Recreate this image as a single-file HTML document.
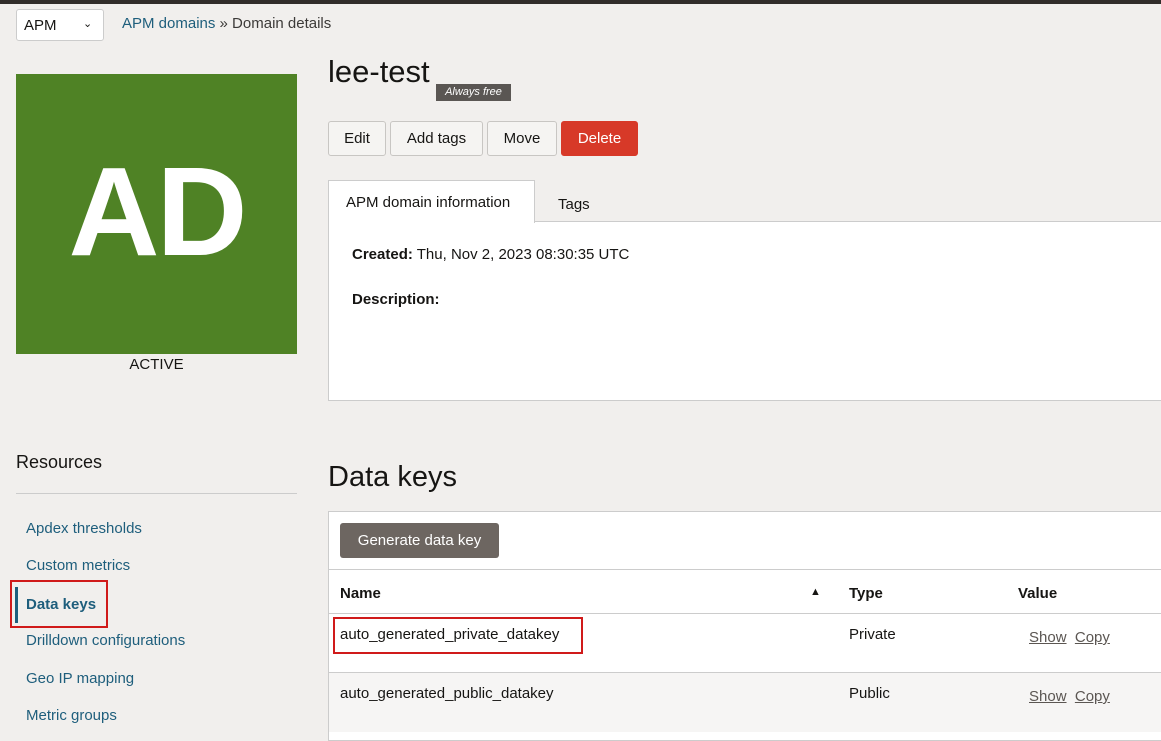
<!DOCTYPE html>
<html><head><style>
*{margin:0;padding:0;box-sizing:border-box}
body{width:1161px;height:731px;overflow:hidden;background:#f1efed;font-family:"Liberation Sans",sans-serif;color:#161513;position:relative;font-size:15px}
.a{position:absolute}
.topbar{left:0;top:0;width:1161px;height:4px;background:#312d2a}
.sel{left:16px;top:9px;width:88px;height:32px;background:#fff;border:1px solid #ccc;border-radius:3px;font-size:15px;padding:7px 0 0 7px}
.btn{position:absolute;top:121px;height:35px;border:1px solid #c8c6c3;background:#f5f4f2;border-radius:3px;font-size:15px;text-align:center;line-height:33px;color:#161513}
.nav{left:26px;font-size:15px;color:#1e5e7c}
.link{text-decoration:underline;color:#5b5652;font-size:15px}
</style></head><body>
<div class="a topbar"></div>
<div class="a sel">APM<span style="position:absolute;left:66px;top:7px;font-size:11px">&#8964;</span></div>
<div class="a" style="left:122px;top:15px;font-size:15px;color:#3c3a38"><span style="color:#1e5e7c">APM domains</span> » Domain details</div>
<div class="a" style="left:16px;top:74px;width:281px;height:280px;background:#4f8225;color:#fff;font-weight:bold;font-size:126px;text-align:center;line-height:276px;letter-spacing:-3px">AD</div>
<div class="a" style="left:16px;top:356px;width:281px;text-align:center;font-size:15px">ACTIVE</div>
<div class="a" style="left:328px;top:54px;font-size:31px">lee-test</div>
<div class="a" style="left:436px;top:84px;width:75px;height:17px;background:#5a5653;color:#fff;font-size:11px;font-style:italic;text-align:center;line-height:17px">Always free</div>
<div class="btn" style="left:328px;width:58px">Edit</div>
<div class="btn" style="left:390px;width:93px">Add tags</div>
<div class="btn" style="left:487px;width:70px">Move</div>
<div class="btn" style="left:561px;width:77px;background:#d73928;border-color:#d73928;color:#fff">Delete</div>
<div class="a" style="left:328px;top:221px;width:840px;height:180px;background:#fff;border:1px solid #ccc"></div>
<div class="a" style="left:328px;top:180px;width:207px;height:43px;background:#fff;border:1px solid #ccc;border-bottom:none;font-size:15px;padding:13px 0 0 17px">APM domain information</div>
<div class="a" style="left:558px;top:196px;font-size:15px">Tags</div>
<div class="a" style="left:352px;top:246px;font-size:15px"><b>Created:</b> Thu, Nov 2, 2023 08:30:35 UTC</div>
<div class="a" style="left:352px;top:291px;font-size:15px;font-weight:bold">Description:</div>
<div class="a" style="left:16px;top:452px;font-size:18px">Resources</div>
<div class="a" style="left:16px;top:493px;width:281px;height:1px;background:#ccc"></div>
<div class="a nav" style="top:520px">Apdex thresholds</div>
<div class="a nav" style="top:557px">Custom metrics</div>
<div class="a" style="left:15px;top:587px;width:3px;height:36px;background:#1e5e7c"></div>
<div class="a nav" style="top:596px;font-weight:bold">Data keys</div>
<div class="a" style="left:10px;top:580px;width:98px;height:48px;border:2px solid #d01a1a"></div>
<div class="a nav" style="top:632px">Drilldown configurations</div>
<div class="a nav" style="top:670px">Geo IP mapping</div>
<div class="a nav" style="top:707px">Metric groups</div>
<div class="a" style="left:328px;top:461px;font-size:29px">Data keys</div>
<div class="a" style="left:328px;top:511px;width:840px;height:230px;background:#fff;border:1px solid #ccc"></div>
<div class="a" style="left:340px;top:523px;width:159px;height:35px;background:#6d6661;border-radius:3px;color:#fff;font-size:15px;text-align:center;line-height:35px">Generate data key</div>
<div class="a" style="left:329px;top:569px;width:840px;height:1px;background:#ccc"></div>
<div class="a" style="left:340px;top:585px;font-weight:bold;font-size:15px">Name</div>
<div class="a" style="left:810px;top:586px;font-size:11px">▲</div>
<div class="a" style="left:849px;top:585px;font-weight:bold;font-size:15px">Type</div>
<div class="a" style="left:1018px;top:585px;font-weight:bold;font-size:15px">Value</div>
<div class="a" style="left:329px;top:613px;width:840px;height:1px;background:#ccc"></div>
<div class="a" style="left:340px;top:626px">auto_generated_private_datakey</div>
<div class="a" style="left:333px;top:617px;width:250px;height:37px;border:2px solid #d01a1a"></div>
<div class="a" style="left:849px;top:626px">Private</div>
<div class="a" style="left:1029px;top:629px"><span class="link">Show</span>&nbsp;&nbsp;<span class="link">Copy</span></div>
<div class="a" style="left:329px;top:672px;width:840px;height:60px;background:#f6f5f4;border-top:1px solid #ccc"></div>
<div class="a" style="left:340px;top:685px">auto_generated_public_datakey</div>
<div class="a" style="left:849px;top:685px">Public</div>
<div class="a" style="left:1029px;top:688px"><span class="link">Show</span>&nbsp;&nbsp;<span class="link">Copy</span></div>
</body></html>
